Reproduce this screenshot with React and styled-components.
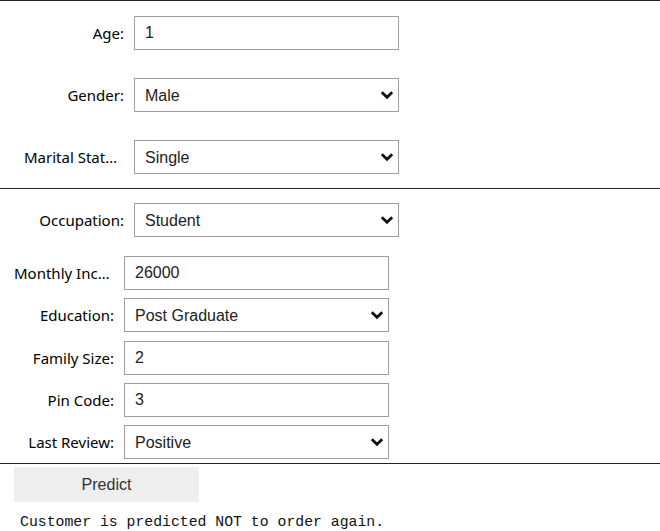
import styled, { createGlobalStyle } from "styled-components";

const GlobalStyle = createGlobalStyle`
  body {
    margin: 0;
    background: #fff;
    font-family: "Noto Sans", "Open Sans", sans-serif;
  }
`;

const Page = styled.div`
  width: 660px;
  border-top: 1px solid #222;
`;

const Group = styled.div`
  display: flex;
  flex-direction: column;
  gap: ${(p) => p.$gap}px;
  padding: ${(p) => p.$pad};
  border-bottom: ${(p) => (p.$line ? "1px solid #222" : "none")};
`;

const Row = styled.div`
  display: flex;
  align-items: center;
  gap: 10px;
  padding-left: ${(p) => p.$indent}px;
  height: 34px;
`;

const Label = styled.label`
  width: 100px;
  text-align: right;
  font-size: 15px;
  color: #000;
  white-space: nowrap;
  overflow: hidden;
  text-overflow: ellipsis;
`;

const Field = styled.div`
  position: relative;
  width: 265px;
  height: 34px;
`;

const TextInput = styled.input`
  box-sizing: border-box;
  width: 100%;
  height: 100%;
  border: 1px solid #9e9e9e;
  padding: 0 10px;
  font-family: "Liberation Sans", Arial, sans-serif;
  font-size: 16px;
  color: #222;
  background: #fff;
  outline: none;
`;

const Select = styled.select`
  box-sizing: border-box;
  width: 100%;
  height: 100%;
  border: 1px solid #9e9e9e;
  border-radius: 0;
  padding: 0 30px 0 10px;
  font-family: "Liberation Sans", Arial, sans-serif;
  font-size: 16px;
  color: #222;
  background: #fff;
  appearance: none;
  outline: none;
`;

const Chevron = styled.svg`
  position: absolute;
  right: 5px;
  top: 12px;
  pointer-events: none;
`;

const Footer = styled.div`
  padding: 3px 0 0 14px;
`;

const Button = styled.button`
  display: block;
  width: 185px;
  height: 35px;
  border: none;
  background: #eeeeee;
  font-family: "Liberation Sans", Arial, sans-serif;
  font-size: 16px;
  color: #333;
`;

const Output = styled.pre`
  margin: 11px 0 0 20px;
  font-family: "Liberation Mono", "DejaVu Sans Mono", monospace;
  font-size: 14.8px;
  line-height: 18px;
  color: #111;
`;

const Down = () => (
  <Chevron width="14" height="10" viewBox="0 0 14 10">
    <path d="M1.8 2.2 L7 7.2 L12.2 2.2" fill="none" stroke="#111" strokeWidth="2.8" />
  </Chevron>
);

const TextRow = ({ label, value, indent }) => (
  <Row $indent={indent}>
    <Label>{label}</Label>
    <Field>
      <TextInput defaultValue={value} />
    </Field>
  </Row>
);

const SelectRow = ({ label, value, options, indent }) => (
  <Row $indent={indent}>
    <Label>{label}</Label>
    <Field>
      <Select defaultValue={value}>
        {options.map((o) => (
          <option key={o}>{o}</option>
        ))}
      </Select>
      <Down />
    </Field>
  </Row>
);

export default function App() {
  return (
    <>
      <GlobalStyle />
      <Page>
        <Group $gap={28} $pad="15px 0 14px" $line>
          <TextRow label="Age:" value="1" indent={24} />
          <SelectRow label="Gender:" value="Male" options={["Male", "Female"]} indent={24} />
          <SelectRow
            label="Marital Status:"
            value="Single"
            options={["Single", "Married", "Prefer not to say"]}
            indent={24}
          />
        </Group>
        <Group $gap={19} $pad="14px 0 0">
          <SelectRow
            label="Occupation:"
            value="Student"
            options={["Student", "Employee", "Self Employeed", "House wife"]}
            indent={24}
          />
          <Group $gap={8.33} $pad="0 0 4px" $line>
            <TextRow label="Monthly Income:" value="26000" indent={14} />
            <SelectRow
              label="Education:"
              value="Post Graduate"
              options={["Graduate", "Post Graduate", "Ph.D", "School", "Uneducated"]}
              indent={14}
            />
            <TextRow label="Family Size:" value="2" indent={14} />
            <TextRow label="Pin Code:" value="3" indent={14} />
            <SelectRow
              label="Last Review:"
              value="Positive"
              options={["Positive", "Negative"]}
              indent={14}
            />
          </Group>
        </Group>
        <Footer>
          <Button>Predict</Button>
        </Footer>
        <Output>Customer is predicted NOT to order again.</Output>
      </Page>
    </>
  );
}
